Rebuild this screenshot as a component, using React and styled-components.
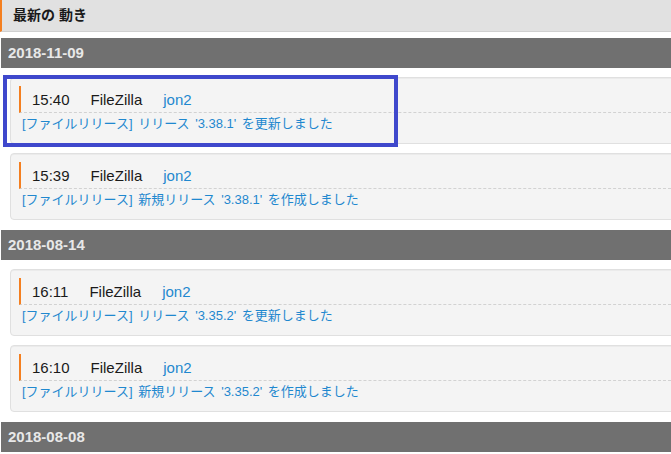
import styled, { createGlobalStyle } from "styled-components";

const GlobalStyle = createGlobalStyle`
  html, body {
    margin: 0;
    padding: 0;
    background: #fff;
    overflow: hidden;
  }
  body {
    font-family: "Liberation Sans", Arial, "Noto Sans CJK JP", sans-serif;
    color: #222;
  }
`;

const activity = [
  {
    date: "2018-11-09",
    items: [
      { time: "15:40", project: "FileZilla", user: "jon2", text: "[ファイルリリース] リリース '3.38.1' を更新しました", marked: true },
      { time: "15:39", project: "FileZilla", user: "jon2", text: "[ファイルリリース] 新規リリース '3.38.1' を作成しました" },
    ],
  },
  {
    date: "2018-08-14",
    items: [
      { time: "16:11", project: "FileZilla", user: "jon2", text: "[ファイルリリース] リリース '3.35.2' を更新しました" },
      { time: "16:10", project: "FileZilla", user: "jon2", text: "[ファイルリリース] 新規リリース '3.35.2' を作成しました" },
    ],
  },
  { date: "2018-08-08", items: [] },
];

export default function App() {
  return (
    <>
      <GlobalStyle />
      <Swrap>
        <Stitle>最新の 動き</Stitle>
        {activity.map((day) => (
          <Sday key={day.date}>
            <Sdate>{day.date}</Sdate>
            {day.items.map((item) => (
              <Scard key={item.time}>
                <Shead>
                  <Stime>{item.time}</Stime>
                  <Sproject>{item.project}</Sproject>
                  <Slink href="#">{item.user}</Slink>
                </Shead>
                <Sbody>
                  <Slink href="#">{item.text}</Slink>
                </Sbody>
                {item.marked && <Smark />}
              </Scard>
            ))}
          </Sday>
        ))}
      </Swrap>
    </>
  );
}

const Swrap = styled.div`
  width: 690px;
`;

const Stitle = styled.h2`
  margin: 0;
  height: 31px;
  line-height: 31px;
  padding-left: 11px;
  font-size: 14px;
  font-weight: bold;
  color: #1a1a1a;
  background: #e1e1e1;
  border-left: 2px solid #f47f20;
  border-bottom: 1px solid #d0d0d0;
`;

const Sday = styled.section`
  margin-top: 6px;
  & + & {
    margin-top: 10px;
  }
`;

const Sdate = styled.h3`
  margin: 0 0 0 1px;
  height: 30px;
  line-height: 30px;
  padding-left: 7px;
  font-size: 15px;
  font-weight: bold;
  color: #e8e8e8;
  background: #707070;
`;

const Scard = styled.div`
  position: relative;
  margin: 9px 0 0 10px;
  padding: 8px;
  height: 67px;
  box-sizing: border-box;
  background: #f4f4f4;
  border: 1px solid #e0e0e0;
  border-radius: 4px;
  box-shadow: inset 0 1px 0 #ebebeb;
`;

const Shead = styled.div`
  display: flex;
  align-items: center;
  height: 26px;
  padding-left: 11px;
  border-left: 2px solid #f47f20;
  border-bottom: 1px dashed #d2d2d2;
  font-size: 15px;
`;

const Stime = styled.span`
  margin-right: 21px;
  color: #1a1a1a;
`;

const Sproject = styled.span`
  margin-right: 21px;
  color: #1a1a1a;
`;

const Slink = styled.a`
  color: #1f88cf;
  text-decoration: none;
`;

const Sbody = styled.div`
  padding-left: 3px;
  height: 21px;
  line-height: 21px;
  font-size: 13px;
  word-spacing: 2px;
`;

const Smark = styled.div`
  position: absolute;
  left: -8px;
  top: -3px;
  width: 395px;
  height: 72px;
  box-sizing: border-box;
  border: 4px solid #3f48cc;
`;
